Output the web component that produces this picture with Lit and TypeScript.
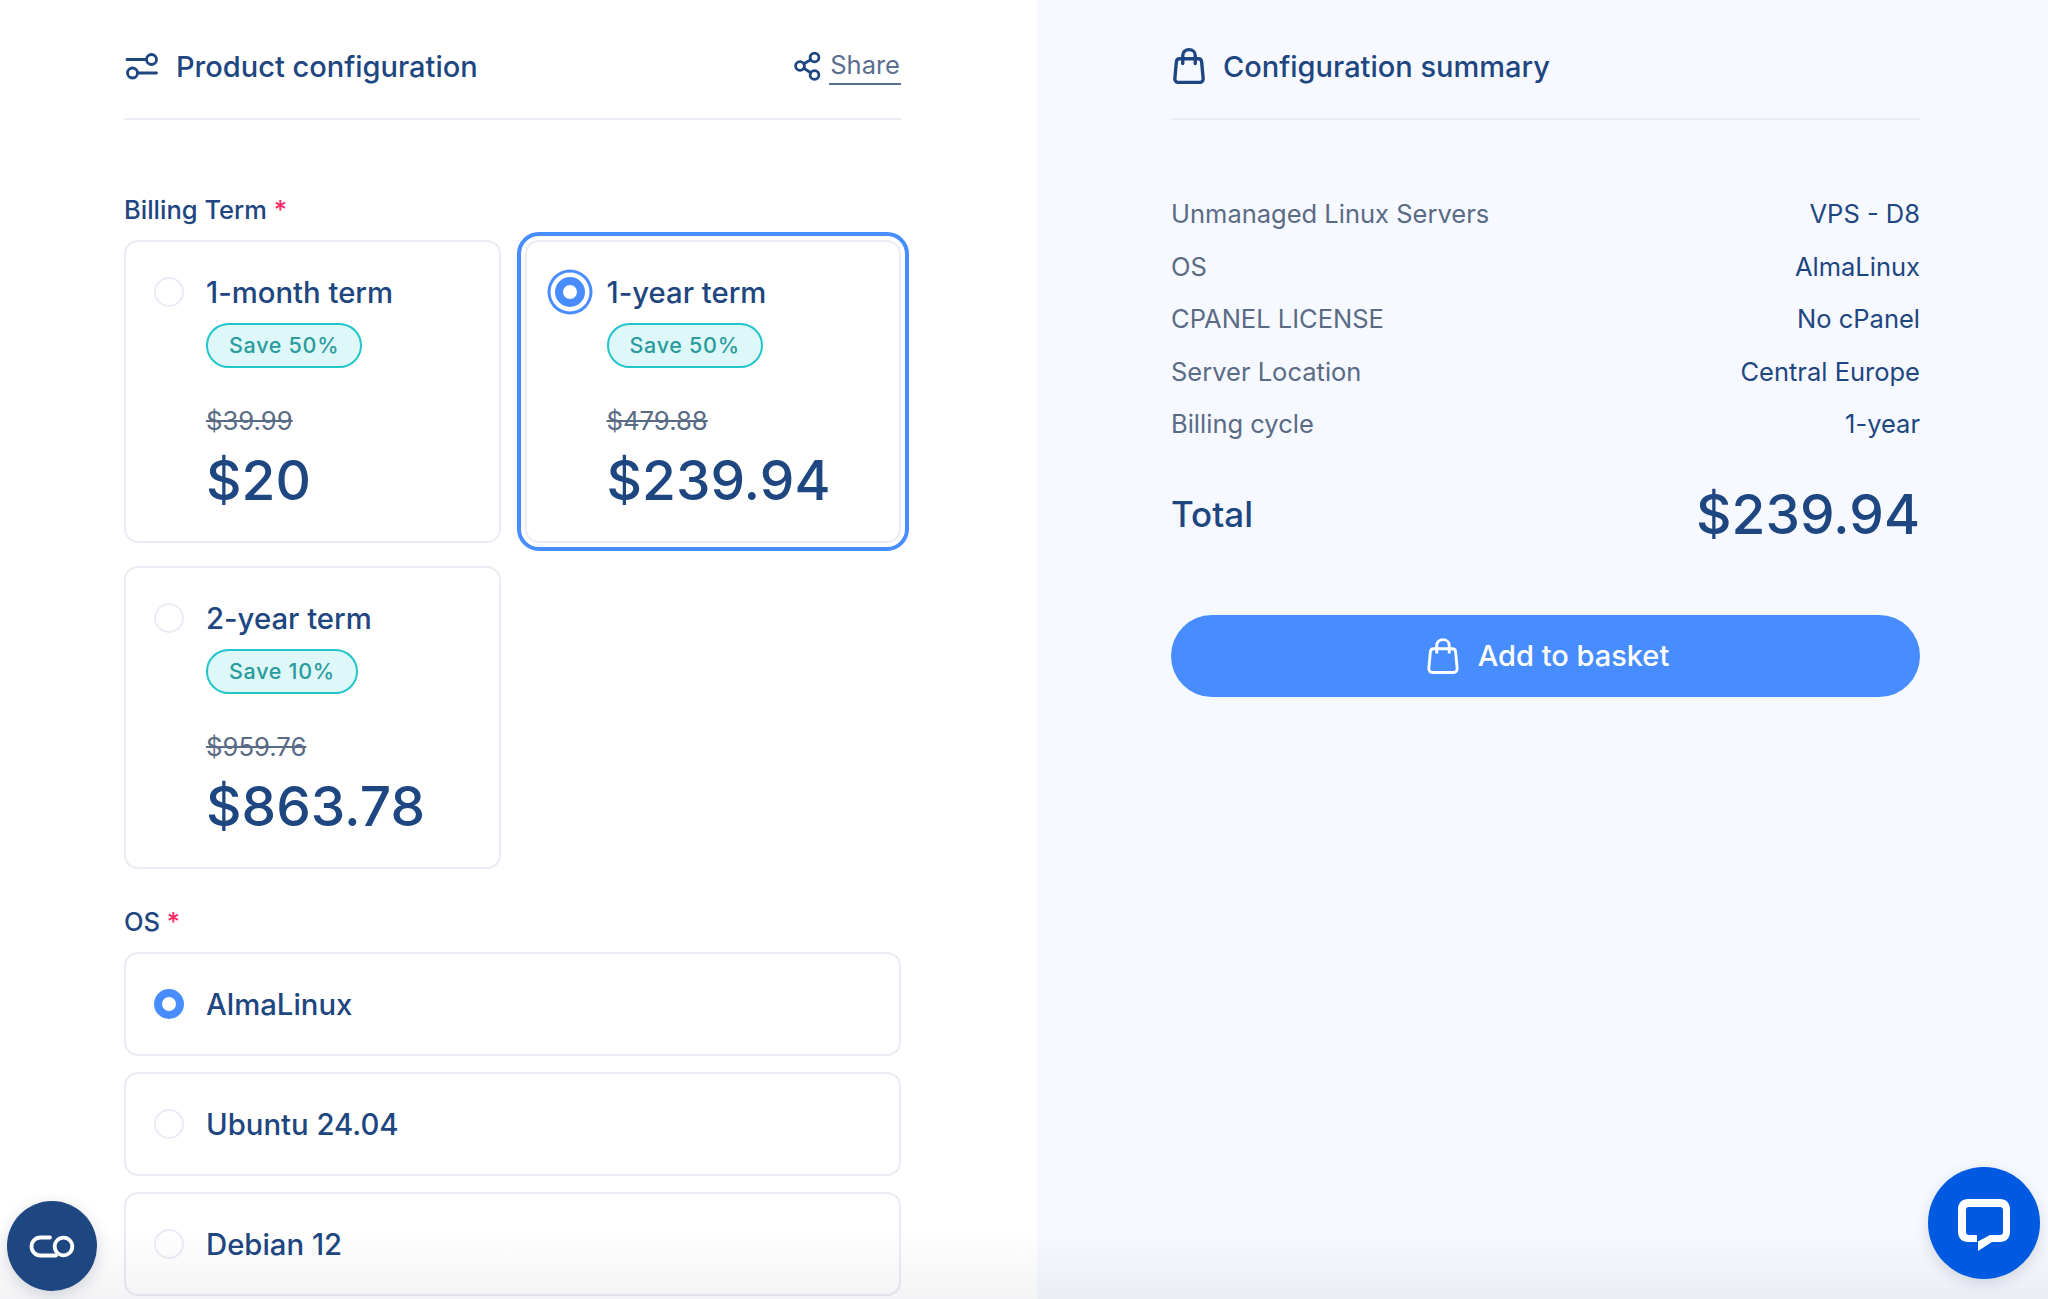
import { LitElement, html, css, svg } from 'lit';
import { customElement } from 'lit/decorators.js';
import { classMap } from 'lit/directives/class-map.js';

const terms = [
  { name: '1-month term', save: 'Save 50%', was: '$39.99', price: '$20', selected: false },
  { name: '1-year term', save: 'Save 50%', was: '$479.88', price: '$239.94', selected: true },
  { name: '2-year term', save: 'Save 10%', was: '$959.76', price: '$863.78', selected: false },
];

const systems = [
  { name: 'AlmaLinux', selected: true },
  { name: 'Ubuntu 24.04', selected: false },
  { name: 'Debian 12', selected: false },
];

const summary = [
  ['Unmanaged Linux Servers', 'VPS - D8'],
  ['OS', 'AlmaLinux'],
  ['CPANEL LICENSE', 'No cPanel'],
  ['Server Location', 'Central Europe'],
  ['Billing cycle', '1-year'],
];

const bag = svg`
  <path d="M7.2 9h15.6c1.4 0 2.5 1 2.7 2.4l1.3 14c.2 1.8-1.2 3.3-3 3.3H6.2c-1.8 0-3.2-1.5-3-3.3l1.3-14C4.7 10 5.8 9 7.2 9z" />
  <path d="M9.8 13V6.2C9.8 3.3 12.1 1.4 15 1.4s5.2 1.9 5.2 4.8V13" />
`;

@customElement('app-root')
export class AppRoot extends LitElement {
  static styles = css`
    :host {
      display: block;
      position: relative;
      height: 1299px;
      overflow: hidden;
      font-family: Inter, 'Liberation Sans', sans-serif;
      color: #1e4680;
      background: #fff;
    }

    .page {
      display: grid;
      grid-template-columns: 1037px 1fr;
      height: 100%;
    }

    .config {
      padding: 46px 136px 0 124px;
    }

    .side {
      padding: 46px 128px 0 134px;
      background: #f6f9ff;
    }

    .head {
      display: flex;
      align-items: center;
      height: 40px;
      padding-bottom: 32px;
      border-bottom: 2px solid #ebecf3;
      font-size: 29px;
      font-weight: 460;
    }

    .head svg {
      fill: none;
      stroke: #1e4680;
      stroke-width: 2.8;
      stroke-linecap: round;
      stroke-linejoin: round;
    }

    .head .title-icon {
      width: 34px;
      height: 30px;
      margin-right: 18px;
    }

    .side .head .title-icon {
      width: 36px;
      height: 36px;
      margin-right: 16px;
    }

    .share {
      display: flex;
      align-items: center;
      margin-left: auto;
      font-size: 25.5px;
      font-weight: 400;
      color: #5a6f90;
    }

    .share svg {
      width: 28px;
      height: 30px;
      margin-right: 8px;
    }

    .share span {
      line-height: 36px;
      border-bottom: 2px solid #5a6f90;
      padding: 0 1px;
    }

    .label {
      height: 32px;
      line-height: 32px;
      margin: 74px 0 14px;
      font-size: 25.5px;
      font-weight: 460;
    }

    .label.os {
      margin-top: 37px;
    }

    .label i {
      font-style: normal;
      color: #ff2a68;
    }

    .terms {
      display: grid;
      grid-template-columns: 376.5px 376.5px;
      gap: 23px 24px;
    }

    .term {
      position: relative;
      box-sizing: border-box;
      display: flex;
      height: 303px;
      padding: 33px 0 0 28px;
      border: 2px solid #ebecf3;
      border-radius: 14px;
      background: #fff;
    }

    .term.selected {
      outline: 4px solid #478dff;
      outline-offset: 4px;
    }

    .radio {
      box-sizing: border-box;
      flex: none;
      width: 30px;
      height: 30px;
      margin-right: 22px;
      border: 2px solid #ebecf3;
      border-radius: 50%;
      background: #fff;
    }

    .radio.on {
      border: 8px solid #478dff;
    }

    .term .radio {
      margin-top: 2px;
    }

    .term .radio.on {
      box-shadow: 0 0 0 4.5px #fff, 0 0 0 7.5px #478dff;
    }

    .term-name {
      line-height: 36px;
      font-size: 29.3px;
      font-weight: 460;
    }

    .badge {
      display: inline-block;
      box-sizing: border-box;
      height: 45px;
      line-height: 41px;
      margin-top: 12px;
      padding: 0 21px;
      border: 2px solid #22c5cc;
      border-radius: 23px;
      background: #def7f8;
      color: #2a9c9d;
      font-size: 21.5px;
      font-weight: 500;
      letter-spacing: 0.7px;
    }

    .was {
      line-height: 32px;
      margin-top: 37px;
      color: #5a6b85;
      font-size: 25.7px;
      text-decoration: line-through;
    }

    .price {
      line-height: 66px;
      margin-top: 10px;
      font-size: 55px;
      font-weight: 460;
    }

    .systems {
      display: flex;
      flex-direction: column;
      gap: 16px;
    }

    .system {
      box-sizing: border-box;
      display: flex;
      align-items: center;
      height: 104px;
      padding-left: 28px;
      border: 2px solid #ebecf3;
      border-radius: 14px;
      background: #fff;
      font-size: 29.3px;
      font-weight: 460;
    }

    .rows {
      margin-top: 68px;
    }

    .row {
      display: flex;
      justify-content: space-between;
      height: 52.5px;
      line-height: 52.5px;
      font-size: 25.5px;
    }

    .row span:first-child {
      color: #5a6b85;
    }

    .total {
      display: flex;
      justify-content: space-between;
      align-items: center;
      height: 70px;
      margin-top: 28px;
      font-size: 35px;
      font-weight: 460;
    }

    .total strong {
      font-size: 55px;
      font-weight: 460;
    }

    .basket {
      display: flex;
      align-items: center;
      justify-content: center;
      height: 82px;
      margin-top: 66px;
      padding-left: 3px;
      border-radius: 41px;
      background: #478dff;
      color: #fff;
      font-size: 29px;
      font-weight: 460;
    }

    .basket svg {
      width: 36px;
      height: 36px;
      margin-right: 17px;
      fill: none;
      stroke: #fff;
      stroke-width: 2.4;
    }

    .fade {
      position: absolute;
      left: 0;
      right: 0;
      bottom: 0;
      height: 70px;
      background: linear-gradient(rgba(20, 30, 60, 0), rgba(20, 30, 60, 0.05));
      pointer-events: none;
    }

    .fab {
      position: absolute;
      display: flex;
      align-items: center;
      justify-content: center;
      border-radius: 50%;
    }

    .fab.prefs {
      left: 7px;
      top: 1201px;
      width: 90px;
      height: 90px;
      background: #1e4680;
      box-shadow: 0 4px 16px rgba(20, 30, 60, 0.16);
    }

    .fab.chat {
      left: 1928px;
      top: 1167px;
      width: 112px;
      height: 112px;
      background: #0059e1;
      box-shadow: 0 4px 14px rgba(20, 30, 60, 0.14);
    }

    .fab.chat svg {
      margin-top: 4px;
    }
  `;

  private radio(on: boolean) {
    return html`<div class=${classMap({ radio: true, on })}></div>`;
  }

  render() {
    return html`
      <div class="page">
        <section class="config">
          <header class="head">
            <svg class="title-icon" viewBox="0 0 34 30">
              <circle cx="27.5" cy="8.5" r="5" />
              <circle cx="8.5" cy="22" r="5" />
              <path d="M3 8.5h19.5M13.5 22h19" />
            </svg>
            Product configuration
            <div class="share">
              <svg viewBox="0 0 28 30">
                <circle cx="21.5" cy="6.5" r="4.4" />
                <circle cx="7" cy="15" r="4.4" />
                <circle cx="21.5" cy="24" r="4.4" />
                <path d="M10.8 12.7l6.9-4M10.8 17.3l6.9 4.4" />
              </svg>
              <span>Share</span>
            </div>
          </header>

          <div class="label">Billing Term <i>*</i></div>
          <div class="terms">
            ${terms.map(
              (t) => html`
                <div class=${classMap({ term: true, selected: t.selected })}>
                  ${this.radio(t.selected)}
                  <div>
                    <div class="term-name">${t.name}</div>
                    <div class="badge">${t.save}</div>
                    <div class="was">${t.was}</div>
                    <div class="price">${t.price}</div>
                  </div>
                </div>
              `
            )}
          </div>

          <div class="label os">OS <i>*</i></div>
          <div class="systems">
            ${systems.map(
              (s) => html`<div class="system">${this.radio(s.selected)}${s.name}</div>`
            )}
          </div>
        </section>

        <aside class="side">
          <header class="head">
            <svg class="title-icon" viewBox="0 0 30 30">${bag}</svg>
            Configuration summary
          </header>
          <div class="rows">
            ${summary.map(
              ([k, v]) => html`<div class="row"><span>${k}</span><span>${v}</span></div>`
            )}
          </div>
          <div class="total"><span>Total</span><strong>$239.94</strong></div>
          <div class="basket">
            <svg viewBox="0 0 30 30">${bag}</svg>
            Add to basket
          </div>
        </aside>
      </div>

      <div class="fade"></div>

      <div class="fab prefs">
        <svg width="46" height="23" viewBox="0 0 46 23" fill="none" stroke="#fff" stroke-width="3.8" stroke-linecap="round">
          <path d="M21 2.5H11.5a9 9 0 0 0 0 18H27" />
          <circle cx="34.5" cy="11.5" r="8.8" />
        </svg>
      </div>
      <div class="fab chat">
        <svg width="52" height="52" viewBox="0 0 52 52">
          <path
            fill="#fff"
            fill-rule="evenodd"
            d="M10 0h32c6 0 10 4 10 10v23c0 6-4 10-10 10h-8L20 52v-9h-10C4 43 0 39 0 33V10C0 4 4 0 10 0zm1 8c-2 0-3 1-3 3v22c0 2 1 3 3 3h8v7l13-7h10c2 0 3-1 3-3V11c0-2-1-3-3-3z"
          />
        </svg>
      </div>
    `;
  }
}
